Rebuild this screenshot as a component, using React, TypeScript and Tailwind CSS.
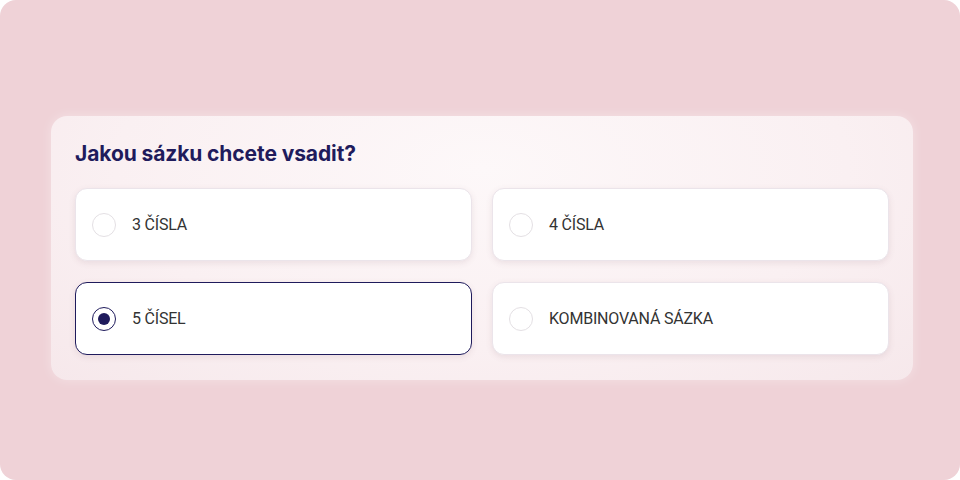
import React, { useState } from "react";

const options = ["3 ČÍSLA", "4 ČÍSLA", "5 ČÍSEL", "KOMBINOVANÁ SÁZKA"];

export default function App() {
  const [sel, setSel] = useState(2);
  return (
    <div className="w-[960px] h-[480px] bg-white">
      <div className="w-full h-full rounded-2xl bg-[#efd2d7] pl-[51px] pt-[116px]">
        <div className="w-[862px] rounded-2xl bg-[radial-gradient(ellipse_at_50%_20%,#fdf8f9_0%,#faf0f2_60%,#f6e8eb_100%)] shadow-[0_0_12px_rgba(255,255,255,0.35)] px-6 pt-6 pb-[25px]">
          <h2 className="text-[21px] leading-7 font-bold tracking-[-0.1px] text-[#1f1b5c] mb-5 font-['Inter',sans-serif]">
            Jakou sázku chcete vsadit?
          </h2>
          <div className="grid grid-cols-2 gap-x-[20px] gap-y-[21px]">
            {options.map((o, i) => {
              const active = sel === i;
              return (
                <button
                  key={o}
                  onClick={() => setSel(i)}
                  className={
                    active
                      ? "h-[73px] flex items-center gap-4 pl-[16px] rounded-xl bg-white border border-[#1f1b5c] shadow-[0_2px_6px_rgba(120,80,100,0.12)] text-left"
                      : "h-[73px] flex items-center gap-4 pl-[16px] rounded-xl bg-white border border-[#ebe4ea] shadow-[0_2px_6px_rgba(120,80,100,0.12)] text-left"
                  }
                >
                  {active ? (
                    <span className="w-6 h-6 rounded-full border-[1.5px] border-[#1f1b5c] flex items-center justify-center">
                      <span className="w-3 h-3 rounded-full bg-[#1f1b5c]" />
                    </span>
                  ) : (
                    <span className="w-6 h-6 rounded-full border border-[#e4e0e4] bg-white" />
                  )}
                  <span className="font-['Roboto',sans-serif] text-[16px] text-[#333] tracking-[-0.2px]">
                    {o}
                  </span>
                </button>
              );
            })}
          </div>
        </div>
      </div>
    </div>
  );
}
